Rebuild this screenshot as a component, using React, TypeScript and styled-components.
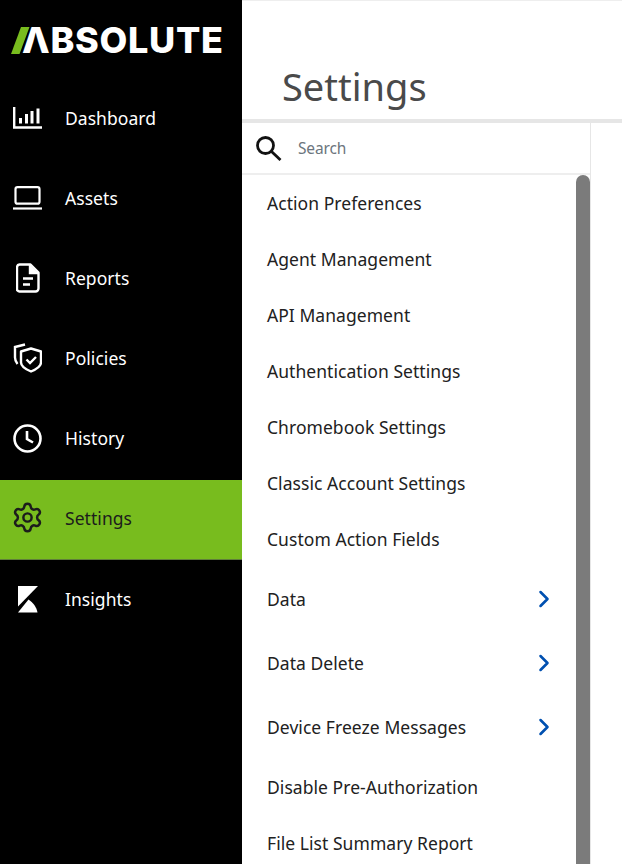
import {ReactNode} from 'react';
import styled, {createGlobalStyle} from 'styled-components';
import {ChevronRight, Settings as SettingsIcon} from 'lucide-react';

const GlobalStyle = createGlobalStyle`
  html, body {
    margin: 0;
    height: 100%;
    overflow: hidden;
    background: #fff;
  }
  * {
    box-sizing: border-box;
  }
`;

const Page = styled.div`
  display: flex;
  width: 622px;
  height: 864px;
  overflow: hidden;
  font-family: 'Noto Sans', 'Open Sans', sans-serif;
`;

const Sidebar = styled.nav`
  flex: 0 0 242px;
  background: #000;
`;

const LogoRow = styled.div`
  display: flex;
  align-items: center;
  height: 80px;
  padding-left: 11px;
`;

const LogoWord = styled.span`
  margin-left: -9px;
  font-family: 'Inter', 'Liberation Sans', sans-serif;
  font-weight: 800;
  font-size: 36px;
  line-height: 1;
  letter-spacing: 0.7px;
  color: #fff;
`;

const NavItem = styled.div<{$active?: boolean}>`
  display: flex;
  align-items: center;
  gap: 23px;
  height: 80px;
  padding: 0 0 4px 13px;
  margin-bottom: ${(props) => (props.$active ? '1px' : '0')};
  font-size: 17.5px;
  letter-spacing: 0.05px;
  color: ${(props) => (props.$active ? '#1c1c1c' : '#fff')};
  background: ${(props) => (props.$active ? '#78bc1e' : 'transparent')};
  border-bottom: ${(props) => (props.$active ? '1px solid #5f7f3a' : 'none')};
`;

const NavIcon = styled.span`
  display: flex;
  justify-content: center;
  align-items: center;
  flex: 0 0 29px;
  width: 29px;
  height: 30px;

  svg {
    flex-shrink: 0;
  }
`;

const Main = styled.main`
  flex: 1;
  display: flex;
  flex-direction: column;
  min-width: 0;
  border-top: 1px solid #eee;
`;

const Header = styled.header`
  flex: 0 0 122px;
  display: flex;
  align-items: flex-end;
  padding: 0 0 8px 40px;
  border-bottom: 4px solid #e6e6e6;
`;

const Title = styled.h1`
  margin: 0;
  font-size: 38px;
  font-weight: 400;
  line-height: 50px;
  color: #4a4a4a;
`;

const Panel = styled.section`
  flex: 1;
  display: flex;
  flex-direction: column;
  width: 349px;
  min-height: 0;
  border-right: 1px solid #e6e6e6;
`;

const SearchRow = styled.div`
  flex: 0 0 52px;
  display: flex;
  align-items: center;
  gap: 16px;
  padding-left: 14px;
  border-bottom: 2px solid #eee;
`;

const SearchText = styled.span`
  font-size: 15.5px;
  letter-spacing: -0.15px;
  color: #6c757d;
`;

const ListArea = styled.div`
  flex: 1;
  display: flex;
  min-height: 0;
  overflow: hidden;
`;

const List = styled.div`
  flex: 1;
  min-width: 0;
`;

const ListItem = styled.div<{$tall?: boolean}>`
  display: flex;
  justify-content: space-between;
  align-items: center;
  height: ${(props) => (props.$tall ? '64px' : '56px')};
  padding: 0 18px 0 25px;
  font-size: 17.5px;
  letter-spacing: 0.05px;
  color: #212121;
`;

const ScrollThumb = styled.div`
  flex: 0 0 14px;
  border-radius: 7px 7px 0 0;
  background: #7b7b7b;
`;

const DashboardGlyph = () => (
  <svg width="30" height="22" viewBox="0 0 30 22" fill="none" stroke="#fff">
    <path d="M1.2 0v20.500H29" strokeWidth="2.4" />
    <path d="M7.500 11v5.500M13.500 7v9.500M19 4v12.500M25 1.500v15" strokeWidth="3" />
  </svg>
);

const LaptopGlyph = () => (
  <svg width="29" height="24" viewBox="0 0 29 24" fill="none" stroke="#fff" strokeWidth="2.2">
    <rect x="2.500" y="1.200" width="24" height="16.500" rx="2" />
    <path d="M0 22.500h29" />
  </svg>
);

const ReportGlyph = () => (
  <svg width="24" height="30" viewBox="0 0 24 30" fill="none" stroke="#fff" strokeWidth="2.4">
    <path d="M3.500 1.500h11l8 8v16a3 3 0 0 1-3 3h-16a2.500 2.500 0 0 1-2.500-3v-21a3 3 0 0 1 2.500-3Z" strokeLinejoin="round" />
    <path d="M14 2v8h8" fill="#fff" />
    <path d="M7 15.500h10M7 21.500h7" />
  </svg>
);

const ShieldGlyph = () => (
  <svg width="29" height="30" viewBox="0 0 29 30" fill="none" stroke="#fff" strokeWidth="2.4">
    <path d="M12 1.500 2 4v10.500c0 2.500.8 4.500 2.500 6.500" />
    <path d="M18 5.500 8 8.500v11c0 3.500 3 6 10 9 7-3 10-5.500 10-9v-11Z" strokeLinejoin="round" />
    <path d="m13.500 16.500 3.500 3.500 6-6" />
  </svg>
);

const ClockGlyph = () => (
  <svg width="29" height="29" viewBox="0 0 29 29" fill="none" stroke="#fff" strokeWidth="2.6">
    <circle cx="14.500" cy="14.500" r="13" />
    <path d="M14 7v8l6 3.500" />
  </svg>
);

const KibanaGlyph = () => (
  <svg width="20" height="27" viewBox="0 0 20 27" fill="#fff">
    <path d="M0 0h20L0 20.500Z" />
    <path d="M0 26.500 10.500 13.500c4.500 3 8 7.500 9 13Z" />
  </svg>
);

const SearchGlyph = () => (
  <svg width="26" height="25" viewBox="0 0 26 25" fill="none" stroke="#111" strokeWidth="2.8">
    <circle cx="9.500" cy="9.500" r="8" />
    <path d="m15.500 15.500 9 8.500" />
  </svg>
);

const Logo = () => (
  <LogoRow>
    <svg width="20" height="27" viewBox="0 0 20 27">
      <path d="M10 0h8.500L8.500 27H0Z" fill="#78bc1e" />
    </svg>
    <LogoWord>ΛBSOLUTE</LogoWord>
  </LogoRow>
);

const navItems: {label: string; icon: ReactNode; active?: boolean}[] = [
  {label: 'Dashboard', icon: <DashboardGlyph />},
  {label: 'Assets', icon: <LaptopGlyph />},
  {label: 'Reports', icon: <ReportGlyph />},
  {label: 'Policies', icon: <ShieldGlyph />},
  {label: 'History', icon: <ClockGlyph />},
  {
    label: 'Settings',
    icon: <SettingsIcon size={33} strokeWidth={1.8} color="#1c1c1c" />,
    active: true,
  },
  {label: 'Insights', icon: <KibanaGlyph />},
];

const settings: {label: string; nested?: boolean}[] = [
  {label: 'Action Preferences'},
  {label: 'Agent Management'},
  {label: 'API Management'},
  {label: 'Authentication Settings'},
  {label: 'Chromebook Settings'},
  {label: 'Classic Account Settings'},
  {label: 'Custom Action Fields'},
  {label: 'Data', nested: true},
  {label: 'Data Delete', nested: true},
  {label: 'Device Freeze Messages', nested: true},
  {label: 'Disable Pre-Authorization'},
  {label: 'File List Summary Report'},
];

export default function App() {
  return (
    <>
      <GlobalStyle />
      <Page>
        <Sidebar>
          <Logo />
          {navItems.map((item) => (
            <NavItem key={item.label} $active={item.active}>
              <NavIcon>{item.icon}</NavIcon>
              {item.label}
            </NavItem>
          ))}
        </Sidebar>
        <Main>
          <Header>
            <Title>Settings</Title>
          </Header>
          <Panel>
            <SearchRow>
              <SearchGlyph />
              <SearchText>Search</SearchText>
            </SearchRow>
            <ListArea>
              <List>
                {settings.map((item) => (
                  <ListItem key={item.label} $tall={item.nested}>
                    {item.label}
                    {item.nested ? <ChevronRight size={28} strokeWidth={2.2} color="#0050b0" /> : null}
                  </ListItem>
                ))}
              </List>
              <ScrollThumb />
            </ListArea>
          </Panel>
        </Main>
      </Page>
    </>
  );
}
